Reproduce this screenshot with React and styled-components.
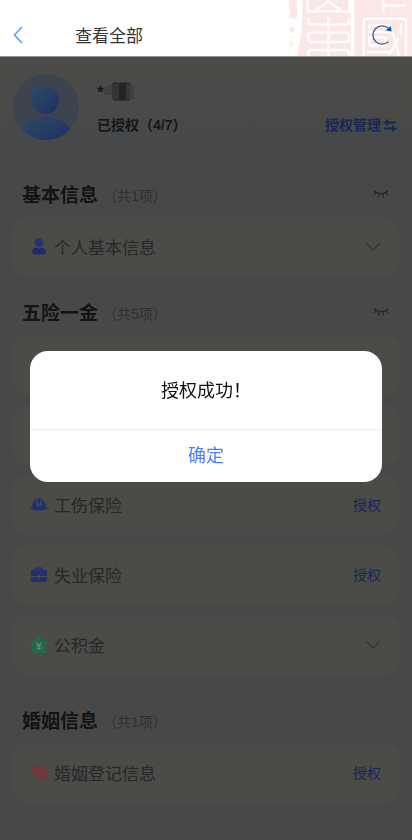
import React from "react";
import styled, { createGlobalStyle, css } from "styled-components";

const GlobalStyle = createGlobalStyle`
  * { box-sizing: border-box; }
  body {
    margin: 0;
    background: #484848;
    font-family: "Liberation Sans", "Noto Sans CJK SC", sans-serif;
  }
  button { font-family: inherit; }
`;

const plainButton = css`
  border: 0;
  padding: 0;
  background: none;
  cursor: pointer;
`;

const Page = styled.div`
  min-height: 100vh;
  background: #484848;
`;

const TopBar = styled.header`
  position: relative;
  height: 57px;
  padding: 14px 18px 0 10px;
  display: flex;
  align-items: center;
  background: #fff;
  border-bottom: 1px solid #929491;
`;

const SealPattern = styled.svg`
  position: absolute;
  top: 0;
  right: 0;
  width: 132px;
  height: 56px;
`;

const IconButton = styled.button`
  ${plainButton}
  position: relative;
  display: flex;
  svg { display: block; }
`;

const PageTitle = styled.h1`
  flex: 1;
  margin: 0 0 0 49px;
  padding-top: 3px;
  font-size: 17px;
  line-height: 24px;
  font-weight: 400;
  color: #333;
`;

const Content = styled.main`
  padding: 17px 13px 36px;
  background: linear-gradient(#4b4b48 0, #4a4a48 50px, #47484a 84px, #484848 120px);
`;

const Profile = styled.section`
  display: flex;
  align-items: center;
  gap: 18px;
  height: 66px;
`;

const AvatarArt = styled.svg`
  flex: none;
  width: 66px;
  height: 66px;
`;

const ProfileInfo = styled.div`
  flex: 1;
  display: flex;
  flex-direction: column;
  gap: 11px;
  padding-top: 2px;
`;

const UserName = styled.div`
  display: flex;
  height: 22px;
  font-size: 17px;
  line-height: 24px;
  font-weight: 700;
  color: #161616;
`;

const ProfileLine = styled.div`
  display: flex;
  justify-content: space-between;
  align-items: center;
  font-size: 14px;
  line-height: 22px;
  font-weight: 700;
  color: #161616;
`;

const ManageButton = styled.button`
  ${plainButton}
  display: flex;
  align-items: center;
  gap: 2px;
  padding-right: 2px;
  font-size: 14px;
  line-height: 22px;
  font-weight: 600;
  color: #1b2655;
`;

const Section = styled.section`
  margin-top: ${(p) => p.$gap}px;
`;

const SectionHead = styled.div`
  display: flex;
  align-items: center;
  height: 28px;
  margin-bottom: 8px;
  padding: 0 10px 0 9px;
`;

const SectionTitle = styled.h2`
  margin: 0;
  padding-top: 2px;
  font-size: 19px;
  line-height: 28px;
  font-weight: 700;
  color: #131313;
`;

const SectionCount = styled.span`
  flex: 1;
  margin-left: 5px;
  padding-top: 2px;
  font-size: 14px;
  line-height: 22px;
  color: #303030;
`;

const CardList = styled.ul`
  display: flex;
  flex-direction: column;
  gap: 10px;
  margin: 0;
  padding: 0;
  list-style: none;
`;

const Card = styled.li`
  display: flex;
  align-items: center;
  height: 60px;
  padding: 0 18px 0 17px;
  border-radius: 14px;
  background: #4b4b48;
  svg { flex: none; }
`;

const CardName = styled.span`
  flex: 1;
  margin-left: 6px;
  padding-top: 3px;
  font-size: 17px;
  line-height: 24px;
  color: #272727;
`;

const GrantButton = styled.button`
  ${plainButton}
  font-size: 14px;
  line-height: 22px;
  color: #1b2655;
`;

const Overlay = styled.div`
  position: fixed;
  inset: 0;
  display: flex;
  align-items: center;
  justify-content: center;
  padding: 0 30px 7px;
`;

const Dialog = styled.div`
  width: 100%;
  max-width: 400px;
  border-radius: 18px;
  background: #fff;
  overflow: hidden;
  text-align: center;
`;

const DialogMessage = styled.p`
  margin: 0;
  padding: 26px 16px 24px;
  font-size: 18px;
  line-height: 28px;
  color: #111;
`;

const ConfirmButton = styled.button`
  ${plainButton}
  width: 100%;
  height: 53px;
  border-top: 1px solid #eee;
  font-size: 18px;
  line-height: 28px;
  color: #4c7dff;
`;

const Seal = () => (
  <SealPattern viewBox="0 0 396 168" aria-hidden="true">
    <path fill="#fbe7e6" d="M28 0H52Q46 14 51 28Q55 44 49 58Q42 60 38 52Q31 56 27 50Q36 36 28 28Q24 18 28 0ZM30 82Q40 78 41 88T33 98Q28 92 30 82ZM36 108Q42 108 40 114Q35 118 36 108ZM30 127Q40 124 38 134T31 137Z" />
    <path fill="#fbe7e6" d="M80 0H396V168H80Z" />
    <path fill="#fbe7e6" d="M67 0H81V168H51Q56 150 55 138Q64 130 60 114Q68 96 64 80Q69 60 66 40Q70 20 67 0Z" />
    <path fill="#fff" d="M212 0H223V168H212Z" />
    <g fill="none" stroke="#fff" strokeWidth="7" strokeLinecap="round" strokeLinejoin="round">
      <path d="M83 0V34H209V0M145 0Q133 19 108 28M145 0Q157 19 182 28" />
      <path d="M145 54V168M85 57V66Q85 74 94 74H197Q207 74 207 66V57M95 98H197Q207 98 207 106V116Q207 126 197 126H95Q85 126 85 116V106Q85 98 95 98M85 168V158Q85 150 94 150H197Q207 150 207 158V168" />
      <path d="M310 0V33M310 17H373" />
      <path d="M251 168V65Q251 56 261 56H368Q378 56 378 65V168" />
      <path d="M268 76H326V96H268ZM268 112H316V136H268ZM264 156H330M328 76L342 112L356 164M362 77V102M354 118L330 160" />
    </g>
  </SealPattern>
);

const BackIcon = () => (
  <svg width="16" height="18" viewBox="0 0 16 18" fill="none" stroke="#68a3f5" strokeWidth="1.8">
    <path d="M12 1L4.500 9L12 17" />
  </svg>
);

const RefreshIcon = () => (
  <svg width="24" height="24" viewBox="0 0 24 24" fill="none">
    <path d="M18.500 18.600A9.200 9.200 0 1 1 18.500 5.400" stroke="#2564a5" strokeWidth="1.300" />
    <path d="M21.700 8.500L20.800 3L15.700 7.500Z" fill="#16599e" />
  </svg>
);

const Avatar = () => (
  <AvatarArt viewBox="0 0 66 66" aria-hidden="true">
    <defs>
      <linearGradient id="avatarTone" x1="0" y1="0" x2="1" y2="1">
        <stop offset="0" stopColor="#2b4a68" />
        <stop offset="1" stopColor="#222f62" />
      </linearGradient>
      <clipPath id="avatarRound"><circle cx="33" cy="33" r="33" /></clipPath>
    </defs>
    <circle cx="33" cy="33" r="33" fill="#3d4450" />
    <g clipPath="url(#avatarRound)" fill="url(#avatarTone)">
      <path d="M19 13H33A13.500 13.500 0 1 1 19 26.500Z" />
      <path d="M9 55C15 46 24 43 33 43S51 46 57 55V66H9Z" />
    </g>
  </AvatarArt>
);

/* Pixelated blocks that hide the rest of the user's name. */
const NameMask = () => (
  <svg width="32" height="20" viewBox="0 0 32 20" aria-hidden="true">
    <path fill="#41413f" d="M-3 8L6 3H9V14H-3Z" />
    <path fill="#343433" d="M8 2H16V19H8Z" />
    <path fill="#232323" d="M15 2H23V19H15Z" />
    <path fill="#353534" d="M22 2H27V19H22Z" />
    <path fill="#40403e" d="M26 4H30V18H26Z" />
    <path stroke="#252525" strokeWidth="1" d="M9 2H14M16 2H26M10 19H26" />
  </svg>
);

const SwapIcon = () => (
  <svg width="14" height="14" viewBox="0 0 14 14" fill="none" stroke="#1b2655" strokeWidth="2.200">
    <path d="M.5 4.500H12.500M4 1.500V7.500M1 10.500H13.500M10 7.500V13.500" />
  </svg>
);

const ClosedEyeIcon = () => (
  <svg width="16" height="10" viewBox="0 0 16 10" fill="none" stroke="#232323" strokeWidth="1.200">
    <path d="M1 1Q8 6.500 15 1M3 2.500L1 5M6 4L5.500 7.500M10 4L10.500 7.500M13 2.500L15 5" />
  </svg>
);

const ChevronIcon = () => (
  <svg width="16" height="10" viewBox="0 0 16 10" fill="none" stroke="#363636" strokeWidth="1.300">
    <path d="M1.500 1.500L8 8L14.500 1.500" />
  </svg>
);

const itemArt = {
  person: (
    <g fill="#25346f">
      <circle cx="8.500" cy="4.500" r="4.200" />
      <path fill="#1e2c69" d="M2 13C2 10.500 4 9.300 6 9.300Q8.500 10.300 11 9.300C13 9.300 15 10.500 15 13Q15 15.500 13 15.500H4Q2 15.500 2 13Z" />
    </g>
  ),
  helmet: (
    <g fill="#22306c">
      <path d="M2 11C2 6.500 4 4 6 2.800Q8.500 1 11 2.800C13 4 15 6.500 15 11Z" />
      <path fill="none" stroke="#4a5168" strokeWidth="1" d="M6.500 3V7Q6.500 9 8.500 9T10.500 7V3" />
      <path d="M.3 10.300H16.700Q16.500 13.500 8.500 13.500T.3 10.300Z" />
    </g>
  ),
  briefcase: (
    <g fill="#22306c">
      <path fill="none" stroke="#22306c" strokeWidth="1.300" d="M5.500 4V2H11.500V4" />
      <rect x="1" y="3.500" width="15" height="6" rx="1.300" />
      <path d="M1 10.300H16V13Q16 15 14 15H3Q1 15 1 13Z" />
      <path fill="none" stroke="#50566b" strokeWidth="1" d="M8.500 8V12M7.500 10H9.500" />
    </g>
  ),
  house: (
    <g>
      <path fill="#226a4a" stroke="#226a4a" strokeLinejoin="round" d="M8.500 .5L16.300 7H14.500V15.500H2.500V7H.7Z" />
      <path fill="none" stroke="#6f8d7a" strokeWidth="1" d="M6 6L8.500 9L11 6M8.500 9V13M6.300 9.500H10.700M6.300 11.500H10.700" />
    </g>
  ),
  heart: (
    <g fill="#733639">
      <path d="M9 14.500Q8 15 7 14.200L2.300 9.300C-1.500 5 3 -.5 8.500 3C14 -.5 18 4 15.200 8.500Z" />
      <path stroke="#4b4b48" strokeWidth="1" d="M13.300 15.500Q12 16 10.800 14L9 12.300C7 9 10.500 6.500 12.800 9C15.500 7.500 18 10 16 12.800Z" />
    </g>
  ),
};

const ItemIcon = ({ name }) => (
  <svg width="18" height="18" viewBox="0 0 17 17" aria-hidden="true">{itemArt[name]}</svg>
);

const sections = [
  {
    title: "基本信息", count: 1, gap: 41, eye: true,
    items: [{ name: "个人基本信息", icon: "person", granted: true }],
  },
  {
    title: "五险一金", count: 5, gap: 22, eye: true,
    items: [
      { id: "covered-1" },
      { id: "covered-2" },
      { name: "工伤保险", icon: "helmet" },
      { name: "失业保险", icon: "briefcase" },
      { name: "公积金", icon: "house", granted: true },
    ],
  },
  {
    title: "婚姻信息", count: 1, gap: 32,
    items: [{ name: "婚姻登记信息", icon: "heart" }],
  },
];

export default function App() {
  return (
    <>
      <GlobalStyle />
      <Page lang="zh-CN">
        <TopBar>
          <Seal />
          <IconButton aria-label="返回"><BackIcon /></IconButton>
          <PageTitle>查看全部</PageTitle>
          <IconButton aria-label="刷新"><RefreshIcon /></IconButton>
        </TopBar>
        <Content>
          <Profile>
            <Avatar />
            <ProfileInfo>
              <UserName>*<NameMask /></UserName>
              <ProfileLine>
                <span>已授权（4/7）</span>
                <ManageButton>授权管理<SwapIcon /></ManageButton>
              </ProfileLine>
            </ProfileInfo>
          </Profile>
          {sections.map((section) => (
            <Section key={section.title} $gap={section.gap}>
              <SectionHead>
                <SectionTitle>{section.title}</SectionTitle>
                <SectionCount>（共{section.count}项）</SectionCount>
                {section.eye && <IconButton aria-label="显示或隐藏"><ClosedEyeIcon /></IconButton>}
              </SectionHead>
              <CardList>
                {section.items.map((item) => (
                  <Card key={item.id ?? item.name}>
                    {item.name && (
                      <>
                        <ItemIcon name={item.icon} />
                        <CardName>{item.name}</CardName>
                        {item.granted
                          ? <IconButton aria-label={`展开${item.name}`}><ChevronIcon /></IconButton>
                          : <GrantButton>授权</GrantButton>}
                      </>
                    )}
                  </Card>
                ))}
              </CardList>
            </Section>
          ))}
        </Content>
      </Page>
      <Overlay lang="zh-CN">
        <Dialog role="alertdialog" aria-modal="true" aria-labelledby="dialog-message">
          <DialogMessage id="dialog-message">授权成功！</DialogMessage>
          <ConfirmButton>确定</ConfirmButton>
        </Dialog>
      </Overlay>
    </>
  );
}
